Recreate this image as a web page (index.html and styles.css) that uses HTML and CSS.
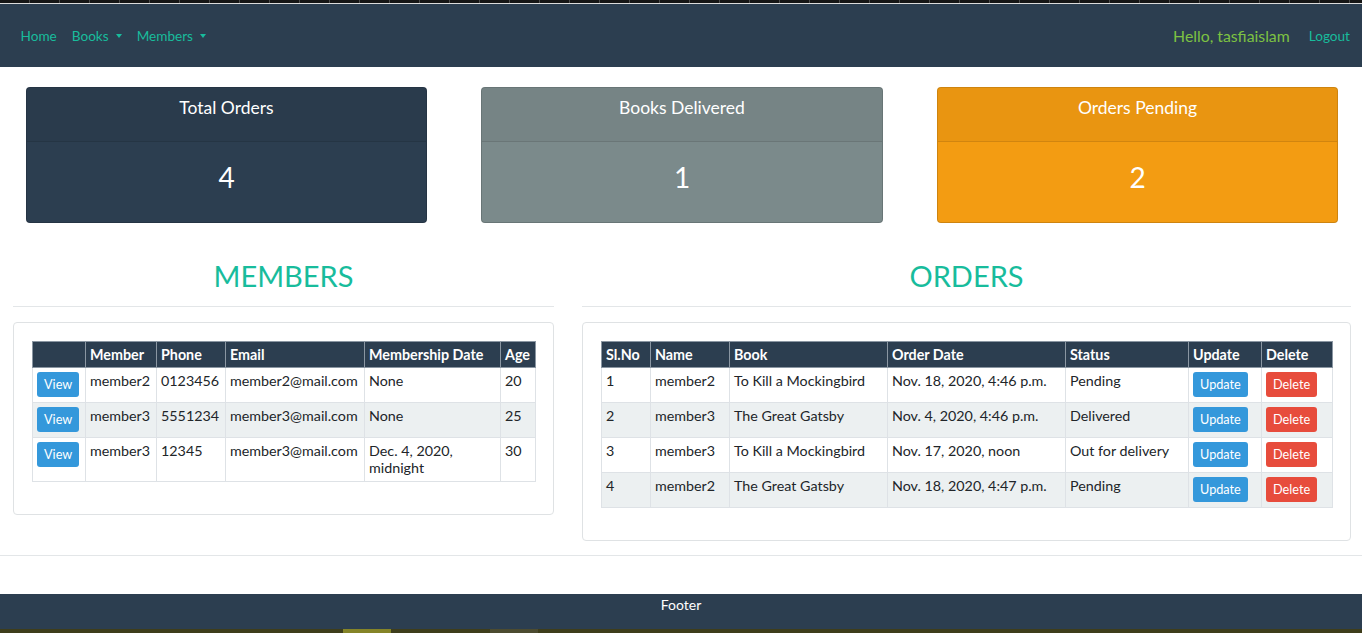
FILE: index.html
```html
<!DOCTYPE html>
<html lang="en">
<head>
<meta charset="utf-8">
<title>Library Dashboard</title>
<link rel="stylesheet" href="styles.css">
</head>
<body>
<div class="topstrip"></div>
<nav class="navbar">
  <ul class="nav-left">
    <li><a class="nav-link" href="#">Home</a></li>
    <li><a class="nav-link dropdown" href="#">Books<span class="caret"></span></a></li>
    <li><a class="nav-link dropdown" href="#">Members<span class="caret"></span></a></li>
  </ul>
  <div class="nav-right">
    <span class="hello">Hello, tasfiaislam</span>
    <a class="nav-link logout" href="#">Logout</a>
  </div>
</nav>

<main>
  <section class="stats">
    <div class="stat stat-dark">
      <div class="stat-header">Total Orders</div>
      <div class="stat-body"><div class="stat-num">4</div></div>
    </div>
    <div class="stat stat-gray">
      <div class="stat-header">Books Delivered</div>
      <div class="stat-body"><div class="stat-num">1</div></div>
    </div>
    <div class="stat stat-orange">
      <div class="stat-header">Orders Pending</div>
      <div class="stat-body"><div class="stat-num">2</div></div>
    </div>
  </section>

  <section class="panels">
    <div class="panel">
      <h3 class="panel-title">MEMBERS</h3>
      <hr class="panel-rule">
      <div class="panel-card">
        <table class="data">
          <colgroup>
            <col class="m1"><col class="m2"><col class="m3"><col class="m4"><col class="m5"><col class="m6">
          </colgroup>
          <thead>
            <tr><th></th><th>Member</th><th>Phone</th><th>Email</th><th>Membership Date</th><th>Age</th></tr>
          </thead>
          <tbody>
            <tr><td><a class="btn btn-blue" href="#">View</a></td><td>member2</td><td>0123456</td><td>member2@mail.com</td><td>None</td><td>20</td></tr>
            <tr><td><a class="btn btn-blue" href="#">View</a></td><td>member3</td><td>5551234</td><td>member3@mail.com</td><td>None</td><td>25</td></tr>
            <tr><td><a class="btn btn-blue" href="#">View</a></td><td>member3</td><td>12345</td><td>member3@mail.com</td><td>Dec. 4, 2020, midnight</td><td>30</td></tr>
          </tbody>
        </table>
      </div>
    </div>

    <div class="panel">
      <h3 class="panel-title">ORDERS</h3>
      <hr class="panel-rule">
      <div class="panel-card">
        <table class="data">
          <colgroup>
            <col class="o1"><col class="o2"><col class="o3"><col class="o4"><col class="o5"><col class="o6"><col class="o7">
          </colgroup>
          <thead>
            <tr><th>Sl.No</th><th>Name</th><th>Book</th><th>Order Date</th><th>Status</th><th>Update</th><th>Delete</th></tr>
          </thead>
          <tbody>
            <tr><td>1</td><td>member2</td><td>To Kill a Mockingbird</td><td>Nov. 18, 2020, 4:46 p.m.</td><td>Pending</td><td><a class="btn btn-blue" href="#">Update</a></td><td><a class="btn btn-red" href="#">Delete</a></td></tr>
            <tr><td>2</td><td>member3</td><td>The Great Gatsby</td><td>Nov. 4, 2020, 4:46 p.m.</td><td>Delivered</td><td><a class="btn btn-blue" href="#">Update</a></td><td><a class="btn btn-red" href="#">Delete</a></td></tr>
            <tr><td>3</td><td>member3</td><td>To Kill a Mockingbird</td><td>Nov. 17, 2020, noon</td><td>Out for delivery</td><td><a class="btn btn-blue" href="#">Update</a></td><td><a class="btn btn-red" href="#">Delete</a></td></tr>
            <tr><td>4</td><td>member2</td><td>The Great Gatsby</td><td>Nov. 18, 2020, 4:47 p.m.</td><td>Pending</td><td><a class="btn btn-blue" href="#">Update</a></td><td><a class="btn btn-red" href="#">Delete</a></td></tr>
          </tbody>
        </table>
      </div>
    </div>
  </section>

  <hr class="page-rule">
</main>

<footer class="footer">Footer</footer>
<div class="bottomstrip">
  <span class="seg seg-a"></span><span class="seg seg-gap"></span><span class="seg seg-b"></span>
</div>
</body>
</html>
```

FILE: styles.css
```css
* { box-sizing: border-box; }

html, body {
  margin: 0;
  padding: 0;
  background: #fff;
}

body {
  font-family: Lato, "Noto Sans", "Liberation Sans", sans-serif;
  color: #212529;
  font-size: 15px;
  width: 1362px;
  height: 633px;
  overflow: hidden;
}

a { text-decoration: none; }

/* thin screen strip at top */
.topstrip {
  height: 4px;
  background-image:
    repeating-linear-gradient(90deg, transparent 0 29px, #4a4a4a 29px 30px),
    linear-gradient(#161616, #161616);
  background-size: 100% 3px, 100% 3px;
  background-repeat: no-repeat;
  background-color: #dcdcdc;
}

/* navbar */
.navbar {
  height: 63px;
  background: #2c3e50;
  display: flex;
  align-items: center;
  justify-content: space-between;
  padding: 0 12px 0 13px;
}

.nav-left {
  list-style: none;
  margin: 0;
  padding: 0;
  display: flex;
  align-items: center;
}

.nav-link {
  color: #18bc9c;
  font-size: 13.6px;
  line-height: 20px;
  padding: 0 7.5px;
  display: inline-flex;
  align-items: center;
}

.caret {
  display: inline-block;
  width: 0;
  height: 0;
  margin-left: 7px;
  border-top: 4px solid #18bc9c;
  border-left: 3.5px solid transparent;
  border-right: 3.5px solid transparent;
}

.nav-right {
  display: flex;
  align-items: center;
}

.hello {
  color: #7dc242;
  font-size: 15.8px;
  line-height: 20px;
  margin-right: 11px;
}

.logout { padding: 0 0 0 8px; }

/* stat cards */
.stats {
  display: grid;
  grid-template-columns: 401px 402px 401px;
  column-gap: 54px;
  padding: 0 24px 0 26px;
  margin-top: 20px;
}

.stat {
  border: 1px solid rgba(0, 0, 0, 0.15);
  border-radius: 4px;
  color: #fff;
  text-align: center;
  overflow: hidden;
}

.stat-header {
  padding: 9px 20px 22px;
  font-size: 17.5px;
  line-height: 22px;
  background: rgba(0, 0, 0, 0.04);
  border-bottom: 1px solid rgba(0, 0, 0, 0.1);
}

.stat-body { padding: 18px 20px 22px; }

.stat-num {
  font-size: 28px;
  line-height: 34px;
  margin-bottom: 6px;
}

.stat-dark { background: #2c3e50; }
.stat-gray { background: #7b8a8b; }
.stat-orange { background: #f39c12; }

/* panels */
.panels {
  display: grid;
  grid-template-columns: 541px 769px;
  column-gap: 28px;
  padding: 0 11px 0 13px;
}

.panel-title {
  margin: 35px 0 0;
  font-size: 29px;
  line-height: 35px;
  font-weight: 400;
  color: #18bc9c;
  text-align: center;
}

.panel-rule {
  margin: 13px 0 15px;
  border: 0;
  border-top: 1px solid #e3e6e8;
  height: 0;
}

.panel-card {
  border: 1px solid #dfe2e4;
  border-radius: 4px;
  padding: 18px;
}

/* tables */
.data {
  width: 100%;
  table-layout: fixed;
  border-collapse: collapse;
  margin-bottom: 14px;
  font-size: 14.3px;
}

.m1 { width: 53px; } .m2 { width: 71px; } .m3 { width: 69px; }
.m4 { width: 139px; } .m5 { width: 136px; } .m6 { width: 35px; }

.o1 { width: 49px; } .o2 { width: 79px; } .o3 { width: 158px; }
.o4 { width: 178px; } .o5 { width: 123px; } .o6 { width: 73px; } .o7 { width: 71px; }

.data th {
  background: #2c3e50;
  color: #fff;
  font-weight: 700;
  text-align: left;
  padding: 4px 4px;
  line-height: 17px;
  border: 1px solid #8a96a2;
  white-space: nowrap;
  overflow: hidden;
}

.data td {
  padding: 4px 4px 5px;
  line-height: 17px;
  vertical-align: top;
  border: 1px solid #dee2e6;
}

.data tbody tr:nth-child(even) td { background: #ecf0f1; }

.btn {
  display: block;
  width: max-content;
  height: 25px;
  line-height: 25px;
  padding: 0 7px;
  font-size: 12.7px;
  color: #fff;
  border-radius: 3px;
}

.btn-blue { background: #3498db; }
.btn-red { background: #e74c3c; }

.page-rule {
  margin: 14px 0 0;
  border: 0;
  border-top: 1px solid #e3e6e8;
  height: 0;
}

/* footer */
.footer {
  margin-top: 38px;
  height: 35px;
  background: #2c3e50;
  color: #fff;
  text-align: center;
  font-size: 14px;
  line-height: 20px;
  padding-top: 1px;
}

.bottomstrip {
  height: 4px;
  background: #3e3d1b;
  display: flex;
}

.seg { display: block; height: 4px; }
.seg-a { margin-left: 343px; width: 48px; background: #858428; }
.seg-gap { width: 99px; }
.seg-b { width: 48px; background: #4c4b30; }
```
